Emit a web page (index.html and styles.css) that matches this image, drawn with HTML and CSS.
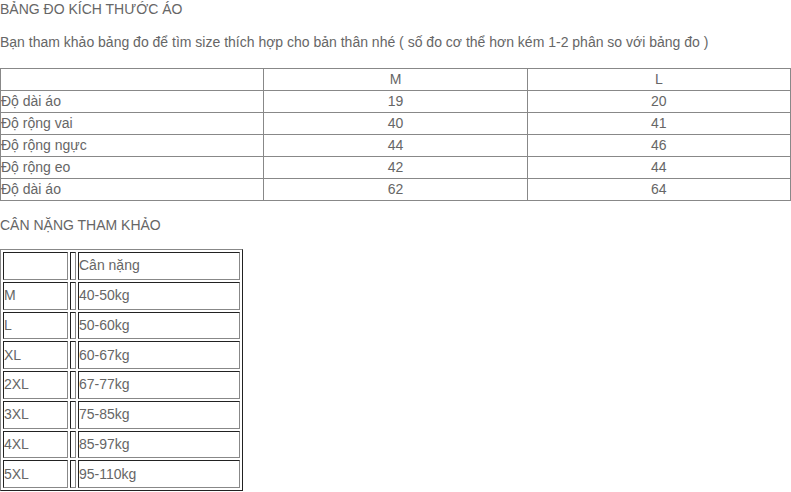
FILE: index.html
```html
<!DOCTYPE html>
<html lang="vi">
<head>
<meta charset="utf-8">
<title>Bảng đo kích thước áo</title>
<link rel="stylesheet" href="styles.css">
</head>
<body>
<p class="title">BẢNG ĐO KÍCH THƯỚC ÁO</p>
<p class="intro">Bạn tham khảo bảng đo để tìm size thích hợp cho bản thân nhé ( số đo cơ thể hơn kém 1-2 phân so với bảng đo )</p>
<table class="size">
  <tr><td></td><td class="c">M</td><td class="c">L</td></tr>
  <tr><td>Độ dài áo</td><td class="c">19</td><td class="c">20</td></tr>
  <tr><td>Độ rộng vai</td><td class="c">40</td><td class="c">41</td></tr>
  <tr><td>Độ rộng ngực</td><td class="c">44</td><td class="c">46</td></tr>
  <tr><td>Độ rộng eo</td><td class="c">42</td><td class="c">44</td></tr>
  <tr><td>Độ dài áo</td><td class="c">62</td><td class="c">64</td></tr>
</table>
<p class="title2">CÂN NẶNG THAM KHẢO</p>
<table class="weight">
  <tr><td class="w1"></td><td class="w2"></td><td class="w3">Cân nặng</td></tr>
  <tr><td class="w1">M</td><td class="w2"></td><td class="w3">40-50kg</td></tr>
  <tr><td class="w1">L</td><td class="w2"></td><td class="w3">50-60kg</td></tr>
  <tr><td class="w1">XL</td><td class="w2"></td><td class="w3">60-67kg</td></tr>
  <tr><td class="w1">2XL</td><td class="w2"></td><td class="w3">67-77kg</td></tr>
  <tr><td class="w1">3XL</td><td class="w2"></td><td class="w3">75-85kg</td></tr>
  <tr><td class="w1">4XL</td><td class="w2"></td><td class="w3">85-97kg</td></tr>
  <tr><td class="w1">5XL</td><td class="w2"></td><td class="w3">95-110kg</td></tr>
</table>
</body>
</html>
```
FILE: styles.css
```css
html, body {
  margin: 0;
  padding: 0;
  background: #fff;
}
body {
  font-family: "Liberation Sans", Arial, sans-serif;
  font-size: 14px;
  color: #666;
  line-height: 18px;
}
.title {
  margin: 0;
}
.intro {
  margin: 15px 0 17px;
}
.size {
  width: 100%;
  border-collapse: collapse;
  table-layout: fixed;
  border: 1px solid #222;
}
.size td {
  border: 1px solid #888;
  padding: 0;
  height: 21px;
  line-height: 21px;
  vertical-align: middle;
  white-space: nowrap;
}
.size td.c {
  text-align: center;
}
.title2 {
  margin: 15px 0 15px;
}
.weight {
  border-collapse: separate;
  border-spacing: 2px;
  border: 1px solid;
  border-color: #888 #222 #222 #888;
}
.weight td {
  padding: 0;
  border: 1px solid;
  border-color: #222 #888 #888 #222;
  height: 25.75px;
  line-height: 25px;
  vertical-align: middle;
  white-space: nowrap;
}
.weight .w1 { width: 63px; }
.weight .w2 { width: 4px; }
.weight .w3 { width: 160px; }
```
